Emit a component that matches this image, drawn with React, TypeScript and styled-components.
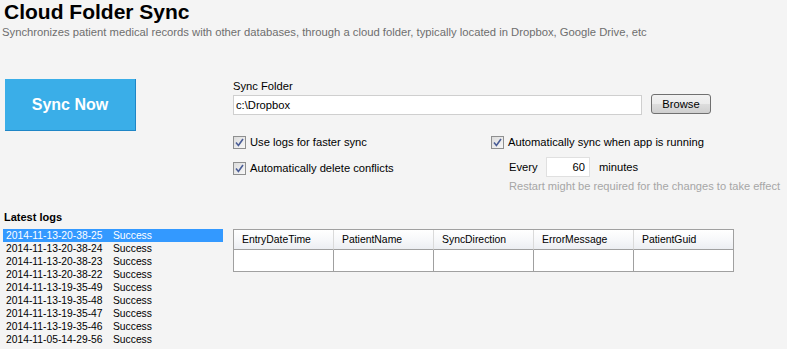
import React from 'react';
import { styled, createGlobalStyle } from 'styled-components';

const GlobalStyle = createGlobalStyle`
  html, body {
    margin: 0;
    padding: 0;
    background: #f4f4f4;
  }
  body {
    font-family: 'Liberation Sans', Arial, sans-serif;
    color: #000;
    width: 787px;
    height: 349px;
    overflow: hidden;
  }
`;

const logs = [
  '2014-11-13-20-38-25',
  '2014-11-13-20-38-24',
  '2014-11-13-20-38-23',
  '2014-11-13-20-38-22',
  '2014-11-13-19-35-49',
  '2014-11-13-19-35-48',
  '2014-11-13-19-35-47',
  '2014-11-13-19-35-46',
  '2014-11-05-14-29-56'
];

const columns = [
  'EntryDateTime',
  'PatientName',
  'SyncDirection',
  'ErrorMessage',
  'PatientGuid'
];

function CheckBox() {
  return (
    <Box>
      <svg width="9" height="9" viewBox="0 0 9 9">
        <path
          d="M1 4.6 L3.4 7.4 L8 1"
          fill="none"
          stroke="#4a5d96"
          strokeWidth="1.6"
        />
      </svg>
    </Box>
  );
}

function Option({ label }: { label: string }) {
  return (
    <CheckRow>
      <CheckBox />
      <span>{label}</span>
    </CheckRow>
  );
}

function App() {
  return (
    <Page>
      <GlobalStyle />
      <Title>Cloud Folder Sync</Title>
      <Subtitle>
        Synchronizes patient medical records with other databases, through a
        cloud folder, typically located in Dropbox, Google Drive, etc
      </Subtitle>

      <TopSection>
        <SyncButton type="button">Sync Now</SyncButton>
        <Settings>
          <FieldLabel>Sync Folder</FieldLabel>
          <FolderRow>
            <FolderInput>c:\Dropbox</FolderInput>
            <BrowseButton type="button">Browse</BrowseButton>
          </FolderRow>
          <Options>
            <OptionColumn>
              <Option label="Use logs for faster sync" />
              <Option label="Automatically delete conflicts" />
            </OptionColumn>
            <OptionColumn>
              <Option label="Automatically sync when app is running" />
              <EveryRow>
                <EveryLabel>Every</EveryLabel>
                <MinutesInput>60</MinutesInput>
                <span>minutes</span>
              </EveryRow>
              <Hint>Restart might be required for the changes to take effect</Hint>
            </OptionColumn>
          </Options>
        </Settings>
      </TopSection>

      <BottomSection>
        <LogsHeading>Latest logs</LogsHeading>
        <LogList>
          {logs.map((stamp, i) => (
            <LogRow key={stamp} $selected={i === 0}>
              <LogStamp>{stamp}</LogStamp>
              <span>Success</span>
            </LogRow>
          ))}
        </LogList>
        <Grid>
          {columns.map((c) => (
            <HeaderCell key={c}>{c}</HeaderCell>
          ))}
          {columns.map((c) => (
            <DataCell key={c} />
          ))}
        </Grid>
      </BottomSection>
    </Page>
  );
}

const Page = styled.div`
  width: 787px;
  height: 349px;
  display: flex;
  flex-direction: column;
`;
const Title = styled.h1`
  margin: 0;
  padding-left: 4px;
  font-size: 21px;
  line-height: 24px;
  font-weight: bold;
`;
const Subtitle = styled.div`
  margin-top: 1px;
  padding-left: 2px;
  font-size: 11.25px;
  line-height: 14px;
  color: #6e6e6e;
`;
const TopSection = styled.div`
  margin-top: 40px;
  display: flex;
  align-items: flex-start;
`;
const SyncButton = styled.button`
  margin-left: 5px;
  width: 131px;
  height: 52px;
  border: 0;
  border-right: 1px solid #1f86c6;
  border-bottom: 1px solid #1f86c6;
  background: #3aaee8;
  color: #fff;
  font-family: 'Liberation Sans', Arial, sans-serif;
  font-weight: bold;
  font-size: 16px;
  padding: 0;
`;
const Settings = styled.div`
  margin-left: 97px;
  padding-top: 1px;
  display: flex;
  flex-direction: column;
  font-size: 11.2px;
`;
const FieldLabel = styled.div`
  line-height: 13px;
  height: 13px;
`;
const FolderRow = styled.div`
  margin-top: 1px;
  display: flex;
  align-items: flex-start;
  gap: 9px;
`;
const FolderInput = styled.div`
  margin-top: 1px;
  width: 405px;
  height: 18px;
  line-height: 18px;
  padding-left: 2px;
  box-sizing: content-box;
  border: 1px solid #cfcfcf;
  background: #fff;
  font-size: 11.2px;
`;
const BrowseButton = styled.button`
  width: 60px;
  height: 20px;
  padding: 0;
  border: 1px solid #707070;
  border-radius: 3px;
  background: linear-gradient(#f2f2f2 0%, #ebebeb 50%, #dddddd 51%, #cfcfcf 100%);
  font-family: 'Liberation Sans', Arial, sans-serif;
  font-size: 11.2px;
  color: #000;
`;
const Options = styled.div`
  margin-top: 14px;
  display: grid;
  grid-template-columns: 258px auto;
`;
const OptionColumn = styled.div`
  display: flex;
  flex-direction: column;
`;
const CheckRow = styled.div`
  height: 26px;
  display: flex;
  align-items: center;
  gap: 4px;
`;
const Box = styled.span`
  width: 11px;
  height: 11px;
  border: 1px solid #8e8f8f;
  background: linear-gradient(135deg, #dcdcdc, #f7f7f7);
  display: flex;
  align-items: center;
  justify-content: center;
`;
const EveryRow = styled.div`
  height: 23px;
  padding-left: 18px;
  display: flex;
  align-items: center;
`;
const EveryLabel = styled.span`
  width: 37px;
`;
const MinutesInput = styled.div`
  width: 38px;
  height: 18px;
  line-height: 18px;
  padding-right: 4px;
  border: 1px solid #e0e0e0;
  background: #fff;
  text-align: right;
  margin-right: 9px;
`;
const Hint = styled.div`
  margin-top: 1px;
  padding-left: 18px;
  font-size: 11.1px;
  line-height: 14px;
  color: #a6a6a6;
`;
const BottomSection = styled.div`
  margin-top: 18px;
  display: grid;
  grid-template-columns: 233px auto;
  grid-template-rows: auto auto;
  align-items: start;
`;
const LogsHeading = styled.div`
  grid-column: 1 / 3;
  padding-left: 4px;
  font-size: 11px;
  font-weight: bold;
  line-height: 13px;
  margin-bottom: 5px;
`;
const LogList = styled.div`
  margin-left: 3px;
  width: 220px;
  display: flex;
  flex-direction: column;
  font-size: 10.3px;
`;
const LogRow = styled.div<{ $selected: boolean }>`
  height: 13px;
  line-height: 13px;
  padding-left: 3px;
  display: flex;
  background: ${(p) => (p.$selected ? '#3399ff' : 'transparent')};
  color: ${(p) => (p.$selected ? '#fff' : '#000')};
`;
const LogStamp = styled.span`
  width: 107px;
`;
const Grid = styled.div`
  width: 500px;
  display: grid;
  grid-template-columns: repeat(5, 100px);
  border-top: 1px solid #a0a0a0;
  border-left: 1px solid #a0a0a0;
  font-size: 10.4px;
`;
const HeaderCell = styled.div`
  height: 19px;
  line-height: 19px;
  padding-left: 8px;
  border-right: 1px solid #dadada;
  border-bottom: 1px solid #a0a0a0;
  background: linear-gradient(#ffffff 0%, #f7f8fa 50%, #eceef2 100%);
  &:nth-child(5) {
    border-right-color: #a0a0a0;
  }
`;
const DataCell = styled.div`
  height: 21px;
  background: #fff;
  border-right: 1px solid #a0a0a0;
  border-bottom: 1px solid #a0a0a0;
`;

export default App;
